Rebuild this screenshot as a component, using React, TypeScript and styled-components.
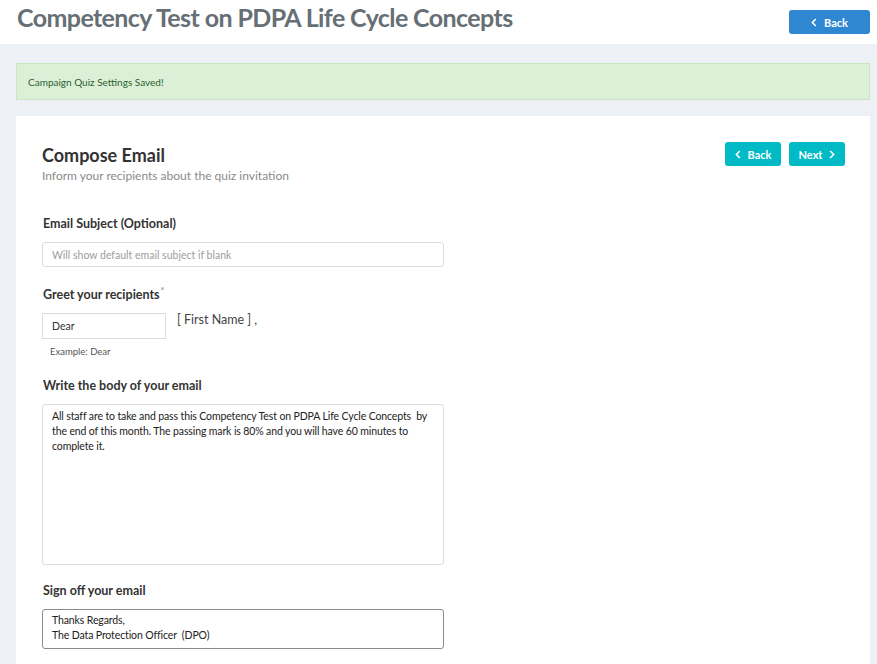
import styled, { createGlobalStyle } from 'styled-components'

const GlobalStyle = createGlobalStyle`
    html, body {
        margin: 0;
        padding: 0;
        background: #edf1f5;
        font-family: Lato, 'Noto Sans', sans-serif;
        color: #333;
    }
    * {
        box-sizing: border-box;
    }
`

const Page = styled.div`
    width: 877px;
    height: 664px;
    background: #edf1f5;
    overflow: hidden;
`

const Header = styled.header`
    height: 44px;
    background: #fff;
    display: flex;
    align-items: center;
    justify-content: space-between;
    padding: 0 7px 0 17px;
`

const Title = styled.h1`
    margin: 0;
    margin-top: -10px;
    font-size: 25px;
    font-weight: 700;
    color: #656f75;
    letter-spacing: -0.6px;
`

const Content = styled.main`
    padding: 19px 7px 0 16px;
    display: flex;
    flex-direction: column;
    gap: 16px;
`

const Alert = styled.div`
    height: 37px;
    background: #dcf0d8;
    border: 1px solid #c9e5c1;
    display: flex;
    align-items: center;
    padding: 0 11px;
    font-size: 10px;
    color: #2c5f2d;
`

const Card = styled.section`
    background: #fff;
    padding: 26px 25px 20px 26px;
    min-height: 560px;
`

const CardHead = styled.div`
    display: flex;
    justify-content: space-between;
    align-items: flex-start;
    margin-bottom: 33px;
`

const Heading = styled.h2`
    margin: 2px 0 2px;
    font-size: 18px;
    font-weight: 700;
    color: #333;
`

const Sub = styled.p`
    margin: 0;
    font-size: 12px;
    color: #8a8a8a;
`

const Actions = styled.div`
    display: flex;
    gap: 8px;
`

const Button = styled.button<{ $tone: 'blue' | 'teal'; $w: number }>`
    width: ${(p) => p.$w}px;
    height: 24px;
    border: none;
    border-radius: 3px;
    background: ${(p) => (p.$tone === 'blue' ? '#2f86d1' : '#00bac5')};
    color: #fff;
    font-family: inherit;
    font-size: 11px;
    font-weight: 700;
    display: flex;
    align-items: center;
    justify-content: center;
    gap: 7px;
    padding: 0;
    cursor: pointer;
`

const Field = styled.div`
    width: 402px;
    display: flex;
    flex-direction: column;
    margin-bottom: 18px;
`

const Label = styled.label`
    font-size: 12.5px;
    font-weight: 700;
    color: #333;
    margin-bottom: 11px;
    margin-left: 1px;
`

const Star = styled.sup`
    color: #999;
    font-size: 9px;
    margin-left: 1px;
`

const TextInput = styled.input<{ $w?: number }>`
    width: ${(p) => (p.$w ? `${p.$w}px` : '100%')};
    height: ${(p) => (p.$w ? 26 : 25)}px;
    border: 1px solid #dcdcdc;
    border-radius: ${(p) => (p.$w ? 0 : 3)}px;
    padding: 0 9px;
    font-family: inherit;
    font-size: 10.5px;
    color: #333;
    outline: none;
    &::placeholder {
        color: #9d9d9d;
    }
`

const GreetRow = styled.div`
    display: flex;
    align-items: flex-start;
    gap: 11px;
`

const Token = styled.span`
    font-size: 12.5px;
    color: #444;
    margin-top: -1px;
`

const Hint = styled.span`
    font-size: 9.5px;
    color: #555;
    margin: 7px 0 3px 8px;
`

const Area = styled.div<{ $h: number; $focus?: boolean }>`
    height: ${(p) => p.$h}px;
    border: 1px solid ${(p) => (p.$focus ? '#8c8c8c' : '#dcdcdc')};
    border-radius: 3px;
    padding: ${(p) => (p.$focus ? '3px 9px' : '4px 9px')};
    font-size: 10.5px;
    letter-spacing: -0.12px;
    line-height: 15px;
    color: #222;
    white-space: pre-wrap;
`

function Chevron({ dir }: { dir: 'left' | 'right' }) {
    return (
        <svg width="6" height="9" viewBox="0 0 6 9">
            <path
                d={dir === 'left' ? 'M4.8 1 L1.4 4.5 L4.8 8' : 'M1.2 1 L4.6 4.5 L1.2 8'}
                fill="none"
                stroke="#fff"
                strokeWidth="1.6"
            />
        </svg>
    )
}

export default function App() {
    return (
        <>
            <GlobalStyle />
            <Page>
                <Header>
                    <Title>Competency Test on PDPA Life Cycle Concepts</Title>
                    <Button $tone="blue" $w={81}>
                        <Chevron dir="left" />
                        Back
                    </Button>
                </Header>
                <Content>
                    <Alert>Campaign Quiz Settings Saved!</Alert>
                    <Card>
                        <CardHead>
                            <div>
                                <Heading>Compose Email</Heading>
                                <Sub>Inform your recipients about the quiz invitation</Sub>
                            </div>
                            <Actions>
                                <Button $tone="teal" $w={56}>
                                    <Chevron dir="left" />
                                    Back
                                </Button>
                                <Button $tone="teal" $w={56}>
                                    Next
                                    <Chevron dir="right" />
                                </Button>
                            </Actions>
                        </CardHead>

                        <Field>
                            <Label>Email Subject (Optional)</Label>
                            <TextInput placeholder="Will show default email subject if blank" />
                        </Field>

                        <Field>
                            <Label>
                                Greet your recipients<Star>*</Star>
                            </Label>
                            <GreetRow>
                                <TextInput $w={124} defaultValue="Dear" />
                                <Token>[ First Name ] ,</Token>
                            </GreetRow>
                            <Hint>Example: Dear</Hint>
                        </Field>

                        <Field>
                            <Label>Write the body of your email</Label>
                            <Area $h={161}>
                                {'All staff are to take and pass this Competency Test on PDPA Life Cycle Concepts  by the end of this month. The passing mark is 80% and you will have 60 minutes to complete it.'}
                            </Area>
                        </Field>

                        <Field>
                            <Label>Sign off your email</Label>
                            <Area $h={40} $focus>
                                {'Thanks Regards,\nThe Data Protection Officer  (DPO)'}
                            </Area>
                        </Field>
                    </Card>
                </Content>
            </Page>
        </>
    )
}
